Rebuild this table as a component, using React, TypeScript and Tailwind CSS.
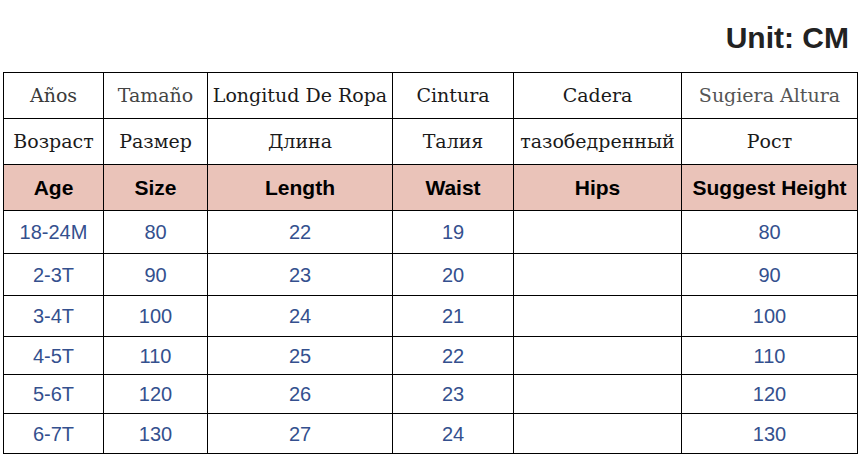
import React from "react";

const es = [
  { t: "Años", c: "text-[#3a3a3a]" },
  { t: "Tamaño", c: "text-[#444444]" },
  { t: "Longitud De Ropa", c: "text-[#1a1a1a]" },
  { t: "Cintura", c: "text-[#1a1a1a]" },
  { t: "Cadera", c: "text-[#1a1a1a]" },
  { t: "Sugiera Altura", c: "text-[#555555]" },
];
const ru = ["Возраст", "Размер", "Длина", "Талия", "тазобедренный", "Рост"];
const en = ["Age", "Size", "Length", "Waist", "Hips", "Suggest Height"];
const rows: { h: string; d: string[] }[] = [
  { h: "h-[43px]", d: ["18-24M", "80", "22", "19", "", "80"] },
  { h: "h-[42px]", d: ["2-3T", "90", "23", "20", "", "90"] },
  { h: "h-[41px]", d: ["3-4T", "100", "24", "21", "", "100"] },
  { h: "h-[38px]", d: ["4-5T", "110", "25", "22", "", "110"] },
  { h: "h-[39px]", d: ["5-6T", "120", "26", "23", "", "120"] },
  { h: "h-[40px]", d: ["6-7T", "130", "27", "24", "", "130"] },
];

const serif = "font-['DejaVu_Serif',serif] text-[19px]";
const sans = "font-['Liberation_Sans',Arial,sans-serif]";

export default function App() {
  return (
    <div className="w-[861px] h-[455px] bg-white overflow-hidden relative">
      <div className={`h-[72px] pt-[21px] pr-[12px] text-right ${sans} font-bold text-[30px] leading-[34px] text-[#222222]`}>
        Unit: CM
      </div>
      <table className="ml-[3px] w-[854px] table-fixed border-collapse">
        <colgroup>
          <col className="w-[100px]" />
          <col className="w-[104px]" />
          <col className="w-[185px]" />
          <col className="w-[121px]" />
          <col className="w-[168px]" />
          <col className="w-[176px]" />
        </colgroup>
        <tbody>
          <tr className="h-[46px]">
            {es.map((x, i) => (
              <td key={i} className={`border border-black text-center p-0 whitespace-nowrap ${serif} ${x.c}`}>
                {x.t}
              </td>
            ))}
          </tr>
          <tr className="h-[46px]">
            {ru.map((x, i) => (
              <td key={i} className={`border border-black text-center p-0 whitespace-nowrap ${serif} text-[#1a1a1a]`}>
                {x}
              </td>
            ))}
          </tr>
          <tr className="h-[46px] bg-[#eac3b9]">
            {en.map((x, i) => (
              <td key={i} className={`border border-black text-center p-0 whitespace-nowrap ${sans} font-bold text-[21px] text-black`}>
                {x}
              </td>
            ))}
          </tr>
          {rows.map((r, ri) => (
            <tr key={ri} className={r.h}>
              {r.d.map((x, i) => (
                <td key={i} className={`border border-black text-center p-0 whitespace-nowrap ${sans} text-[20px] text-[#34508e]`}>
                  {x}
                </td>
              ))}
            </tr>
          ))}
        </tbody>
      </table>
    </div>
  );
}
